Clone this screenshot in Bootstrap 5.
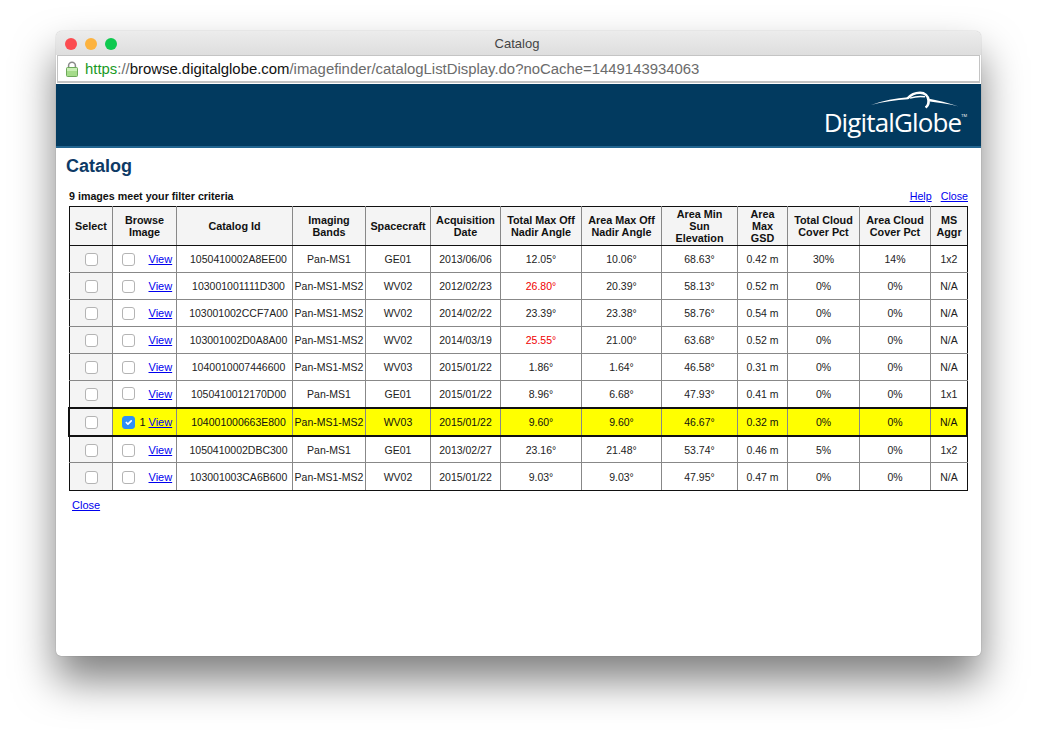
<!DOCTYPE html>
<html lang="en">
<head>
    <meta charset="UTF-8">
    <meta name="viewport" content="width=device-width, initial-scale=1.0">
    <title>Catalog</title>
    <link href="https://cdn.jsdelivr.net/npm/bootstrap@5.3.0/dist/css/bootstrap.min.css" rel="stylesheet">
    <style>
        body {
            background: #fff;
            font-family: "Liberation Sans", Arial, sans-serif;
            padding: 31px 0 0 56px;
            height: 736px;
            overflow: hidden;
        }
        .mac-window {
            width: 925px;
            height: 625px;
            background: #fff;
            border-radius: 6px 6px 5px 5px;
            box-shadow: 0 24px 42px rgba(0, 0, 0, .5), 0 0 1px rgba(0, 0, 0, .45);
            overflow: hidden;
        }
        .title-bar {
            height: 24px;
            padding-top: 2px;
            padding-right: 3px;
            background: linear-gradient(#ececec, #dedede);
            color: #444;
            font-size: 13px;
            position: relative;
        }
        .traffic {
            position: absolute;
            left: 9px;
            top: 7px;
        }
        .dot {
            width: 12px;
            height: 12px;
            border-radius: 50%;
        }
        .dot-red { background: #fc4c51; }
        .dot-yellow { background: #fdb33f; }
        .dot-green { background: #0ec94f; }
        .url-bar {
            height: 28px;
            margin: 0 1px;
            padding-left: 8px;
            padding-top: 1px;
            background: #fff;
            border: 1px solid #c4c4c4;
            border-bottom-width: 2px;
            font-size: 14.9px;
            color: #6b6b6b;
        }
        .url-lock { margin-right: 7px; }
        .url-green { color: #1a9a1f; }
        .url-host { color: #111; }
        .brand-bar {
            height: 64px;
            margin-top: 1px;
            background: #023a5f;
            border-bottom: 2px solid #236590;
            position: relative;
            padding-right: 14px;
        }
        .logo-text {
            font-family: "Open Sans", "Noto Sans", sans-serif;
            font-size: 26px;
            line-height: 30px;
            color: #fff;
            letter-spacing: -.87px;
            margin-top: 23px;
        }
        .logo-text sup {
            font-size: 4px;
            top: -15px;
            letter-spacing: 0;
        }
        .logo-swoosh {
            position: absolute;
            right: 21px;
            top: 6px;
        }
        .page-title {
            font-size: 18px;
            line-height: 22px;
            font-weight: 700;
            color: #0d3a66;
            margin: 7px 0 0 10px;
        }
        .meta-row {
            margin: 11px 13px 0 13px;
            font-size: 10.7px;
            line-height: 14px;
            height: 16px;
            color: #111;
        }
        .meta-row a, .cat-table a, .foot-link {
            color: #0000ee;
        }
        .meta-links {
            gap: 9px;
        }
        .cat-table {
            table-layout: fixed;
            width: 898px;
            margin: 2px 0 0 12px;
            border-collapse: collapse;
            font-size: 10.5px;
            color: #222;
            border: 1px solid #111;
        }
        .cat-table th, .cat-table td {
            border: 1px solid #888;
            padding: 1px 0 0 1px;
            text-align: center;
            vertical-align: middle;
            overflow: hidden;
            white-space: nowrap;
        }
        .cat-table th {
            background: #f4f4f4;
            color: #111;
            font-size: 10.8px;
            line-height: 12px;
            white-space: normal;
            height: 39px;
            padding: 0 0 0 1px;
            border-top: 1px solid #111;
            border-bottom: 1px solid #111;
        }
        .cat-table td { height: 27px; }
        .cat-table td:first-child { background: #f4f4f4; padding: 0 0 0 1px; }
        .cat-table tr > :first-child { border-left: 1px solid #111; }
        .cat-table tr > :last-child { border-right: 1px solid #111; }
        .cat-table tbody tr:last-child td { border-bottom: 1px solid #111; height: 28px; }
        .c1 { width: 43px; } .c2 { width: 64px; } .c3 { width: 116px; } .c4 { width: 73px; }
        .c5 { width: 65px; } .c6 { width: 70px; } .c7 { width: 81px; } .c8 { width: 80px; }
        .c9 { width: 76px; } .c10 { width: 50px; } .c11 { width: 72px; } .c12 { width: 71px; } .c13 { width: 37px; }
        .cat-table td.id-cell { padding-left: 9px; }
        .cat-table .row-picked td {
            background: #ffff00;
            height: 28px;
            color: #111;
            border-top: 2px solid #111;
            border-bottom: 2px solid #111;
        }
        .cat-table .row-picked td:first-child {
            background: #f4f4f4;
            border-left: 2px solid #111;
        }
        .cat-table .row-picked td:last-child { border-right: 2px solid #111; }
        .cat-check.form-check-input {
            width: 13px;
            height: 13px;
            margin: 0;
            border: 1px solid #b4b4b4;
            border-radius: 3px;
            vertical-align: middle;
            float: none;
        }
        .cat-check.form-check-input:checked {
            background-color: #2f8ff7;
            border-color: #2f8ff7;
        }
        .cat-table td.browse-cell { padding: 0 0 0 9px; }
        /* lower rows sit a pixel further down in their cells */
        .cat-table tbody tr:nth-child(n+6) td { padding-top: 3px; }
        .cat-table tbody tr:nth-child(n+7) td:first-child,
        .cat-table tbody tr:nth-child(n+7) td.browse-cell { padding-top: 2px; }
        .cat-table tbody tr:nth-child(6) td:first-child,
        .cat-table tbody tr:nth-child(6) td.browse-cell { padding-top: 0; }
        .browse-num {
            width: 13px;
            text-align: right;
            padding-right: 2px;
            margin-right: 1px;
            font-size: 11px;
        }
        .browse-cell a { font-size: 11px; }
        .over-limit { color: #f00000; }
        .foot-link {
            font-size: 11px;
            margin: 7px 0 0 16px;
            display: inline-block;
            line-height: 14px;
        }
    </style>
</head>
<body>
    <div class="mac-window">
        <div class="title-bar d-flex align-items-center justify-content-center">
            <div class="traffic d-flex gap-2">
                <div class="dot dot-red"></div>
                <div class="dot dot-yellow"></div>
                <div class="dot dot-green"></div>
            </div>
            Catalog
        </div>
        <div class="url-bar d-flex align-items-center">
            <svg width="12" height="16" viewBox="0 0 12 16" class="url-lock flex-shrink-0">
                <path d="M2.6 7V4.6a3.400 3.400 0 0 1 6.800 0V7" fill="none" stroke="#8a8a8a" stroke-width="1.500"/>
                <rect x=".5" y="6.500" width="11" height="9" rx="1" fill="#a5dc8a" stroke="#6da85a"/>
                <rect x="1" y="7" width="10" height="3" fill="#c8efb4"/>
            </svg>
            <span><span class="url-green">https</span>://<span class="url-host">browse.digitalglobe.com</span>/imagefinder/catalogListDisplay.do?noCache=1449143934063</span>
        </div>
        <div class="brand-bar d-flex justify-content-end">
            <svg class="logo-swoosh" width="90" height="20" viewBox="0 0 90 20">
                <path d="M1 15C13 10.500 26 8.300 38 7.300L38 9.300C26 9.800 13 12 1 15Z" fill="#fff"/>
                <path d="M37.500 8.500C40.500 5 45 2.800 50 2.800C55 2.800 58 6 58.500 10C58.800 13 58 16 55.500 17.500" fill="none" stroke="#fff" stroke-width="2.600"/>
                <path d="M40 8.200C45 6.500 50 6 55 6.800" fill="none" stroke="#fff" stroke-width="1.400"/>
                <path d="M58 8.500C67 10.300 79 13 88 16.200C78 14 67 12.400 58 11.300Z" fill="#fff"/>
            </svg>
            <div class="logo-text">DigitalGlobe<sup>TM</sup></div>
        </div>
        <h1 class="page-title">Catalog</h1>
        <div class="meta-row d-flex justify-content-between align-items-center">
            <b>9 images meet your filter criteria</b>
            <span class="meta-links d-flex"><a href="#">Help</a><a href="#">Close</a></span>
        </div>
        <table class="cat-table">
            <thead>
                <tr>
                    <th class="c1">Select</th><th class="c2">Browse Image</th><th class="c3">Catalog Id</th><th class="c4">Imaging Bands</th><th class="c5">Spacecraft</th><th class="c6">Acquisition Date</th><th class="c7">Total Max Off Nadir Angle</th><th class="c8">Area Max Off Nadir Angle</th><th class="c9">Area Min<br>Sun<br>Elevation</th><th class="c10">Area<br>Max<br>GSD</th><th class="c11">Total Cloud Cover Pct</th><th class="c12">Area Cloud Cover Pct</th><th class="c13">MS Aggr</th>
                </tr>
            </thead>
            <tbody id="catRows"></tbody>
        </table>
        <a class="foot-link" href="#">Close</a>
    </div>

    <script src="https://cdn.jsdelivr.net/npm/bootstrap@5.3.0/dist/js/bootstrap.bundle.min.js"></script>
    <script>
        const catalogRows = [
            ['1050410002A8EE00', 'Pan-MS1', 'GE01', '2013/06/06', '12.05°', '10.06°', '68.63°', '0.42 m', '30%', '14%', '1x2'],
            ['103001001111D300', 'Pan-MS1-MS2', 'WV02', '2012/02/23', '26.80°', '20.39°', '58.13°', '0.52 m', '0%', '0%', 'N/A'],
            ['103001002CCF7A00', 'Pan-MS1-MS2', 'WV02', '2014/02/22', '23.39°', '23.38°', '58.76°', '0.54 m', '0%', '0%', 'N/A'],
            ['103001002D0A8A00', 'Pan-MS1-MS2', 'WV02', '2014/03/19', '25.55°', '21.00°', '63.68°', '0.52 m', '0%', '0%', 'N/A'],
            ['1040010007446600', 'Pan-MS1-MS2', 'WV03', '2015/01/22', '1.86°', '1.64°', '46.58°', '0.31 m', '0%', '0%', 'N/A'],
            ['1050410012170D00', 'Pan-MS1', 'GE01', '2015/01/22', '8.96°', '6.68°', '47.93°', '0.41 m', '0%', '0%', '1x1'],
            ['104001000663E800', 'Pan-MS1-MS2', 'WV03', '2015/01/22', '9.60°', '9.60°', '46.67°', '0.32 m', '0%', '0%', 'N/A'],
            ['1050410002DBC300', 'Pan-MS1', 'GE01', '2013/02/27', '23.16°', '21.48°', '53.74°', '0.46 m', '5%', '0%', '1x2'],
            ['103001003CA6B600', 'Pan-MS1-MS2', 'WV02', '2015/01/22', '9.03°', '9.03°', '47.95°', '0.47 m', '0%', '0%', 'N/A']
        ];
        const pickedRow = 6;
        const rowsBody = document.getElementById('catRows');

        catalogRows.forEach((r, i) => {
            const picked = i === pickedRow;
            const tr = document.createElement('tr');
            if (picked) tr.className = 'row-picked';
            const cells = r.map((v, j) => {
                // total off nadir angle over 25 shows red
                const red = j === 4 && parseFloat(v) > 25;
                const cls = j === 0 ? 'id-cell' : (red ? 'over-limit' : '');
                return `<td class="${cls}">${v}</td>`;
            }).join('');
            tr.innerHTML = `<td><input class="form-check-input cat-check" type="checkbox"></td>
                <td class="browse-cell"><div class="d-flex align-items-center">
                    <input class="form-check-input cat-check" type="checkbox"${picked ? ' checked' : ''}>
                    <span class="browse-num">${picked ? '1' : ''}</span><a href="#">View</a>
                </div></td>${cells}`;
            rowsBody.appendChild(tr);
        });
    </script>
</body>
</html>
